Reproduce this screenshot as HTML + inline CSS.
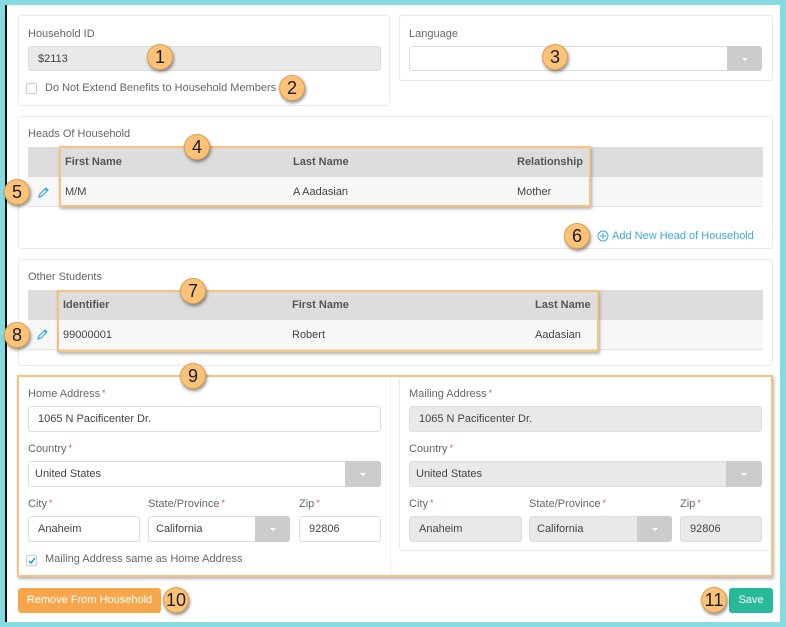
<!DOCTYPE html>
<html><head><meta charset="utf-8"><style>
*{box-sizing:border-box;margin:0;padding:0}
body{width:786px;height:627px;background:#86dbe0;position:relative;overflow:hidden;font-family:"Liberation Sans",sans-serif;font-size:11px;color:#555}
.a{position:absolute}
.page{left:5px;top:5px;width:775px;height:617px;background:#fff;border-left:2px solid #111}
.panel{position:absolute;border:1px solid #eaeaea;border-radius:3px;background:#fff}
.lbl{position:absolute;color:#666;font-size:11px;white-space:nowrap}
.lbl b{color:#d9534f;font-weight:normal;font-size:9px;vertical-align:top;margin-left:2px}
.in{position:absolute;border:1px solid #ddd;border-radius:3px;background:#fff;color:#444;padding-left:9px;font-size:11px;display:flex;align-items:center;white-space:nowrap}
.dis{background:#e9e9e9}
.btn{position:absolute;top:-1px;right:-1px;bottom:-1px;background:#ccc;border-radius:0 3px 3px 0}
.btn:after{content:"";position:absolute;left:50%;top:50%;margin:-1px 0 0 -3px;border:3px solid transparent;border-top:3px solid #fff}
.th{position:absolute;background:#ddd;font-weight:bold;color:#555;font-size:11px}
.tr{position:absolute;background:#f7f7f7;color:#444;font-size:11px;border-bottom:1px solid #e5e5e5}
.c{position:absolute;top:50%;transform:translateY(-50%);white-space:nowrap}
.ob{position:absolute;border:2px solid #f5c27f;box-shadow:1px 2px 3px rgba(0,0,0,.3)}
.bd{position:absolute;width:26px;height:26px;border-radius:50%;background:#fcc378;border:1px solid #d9a050;box-shadow:1px 2px 3px rgba(0,0,0,.45);color:#1b1b2e;font-size:18px;text-align:center;line-height:25px}
.cb{position:absolute;width:11px;height:11px;border:1px solid #ccc;border-radius:2px;background:#fff}
</style></head><body>
<div class="a page"></div>

<div class="panel" style="left:18px;top:15px;width:372px;height:91px"></div>
<div class="lbl" style="left:28px;top:28px">Household ID</div>
<div class="in dis" style="left:28px;top:46px;width:353px;height:25px">$2113</div>
<div class="cb" style="left:26px;top:83px"></div>
<div class="lbl" style="left:45px;top:82px">Do Not Extend Benefits to Household Members</div>

<div class="panel" style="left:399px;top:15px;width:374px;height:66px"></div>
<div class="lbl" style="left:409px;top:28px">Language</div>
<div class="in" style="left:409px;top:46px;width:353px;height:25px"><div class="btn" style="width:35px"></div></div>

<div class="panel" style="left:18px;top:116px;width:755px;height:133px"></div>
<div class="lbl" style="left:28px;top:128px">Heads Of Household</div>
<div class="th" style="left:28px;top:147px;width:735px;height:30px">
<span class="c" style="left:37px">First Name</span><span class="c" style="left:265px">Last Name</span><span class="c" style="left:489px">Relationship</span></div>
<div class="tr" style="left:28px;top:177px;width:735px;height:30px">
<span class="c" style="left:37px">M/M</span><span class="c" style="left:265px">A Aadasian</span><span class="c" style="left:489px">Mother</span></div>
<svg class="a" style="left:37px;top:186px" width="13" height="13" viewBox="0 0 13 13"><path d="M2 11 L3 8 L9 2 L11 4 L5 10 Z M8 3 L10 5" fill="none" stroke="#3aa8d8" stroke-width="1.2"/></svg>
<div class="ob" style="left:59px;top:146px;width:532px;height:61px"></div>
<svg class="a" style="left:597px;top:230px" width="12" height="12"><circle cx="6" cy="6" r="5" fill="none" stroke="#3aa8d8"/><path d="M6 3V9M3 6H9" stroke="#3aa8d8"/></svg>
<div class="lbl" style="left:612px;top:230px;color:#3aa8d8">Add New Head of Household</div>

<div class="panel" style="left:18px;top:259px;width:755px;height:107px"></div>
<div class="lbl" style="left:28px;top:271px">Other Students</div>
<div class="th" style="left:28px;top:290px;width:735px;height:30px">
<span class="c" style="left:35px">Identifier</span><span class="c" style="left:264px">First Name</span><span class="c" style="left:507px">Last Name</span></div>
<div class="tr" style="left:28px;top:320px;width:735px;height:30px">
<span class="c" style="left:35px">99000001</span><span class="c" style="left:264px">Robert</span><span class="c" style="left:507px">Aadasian</span></div>
<svg class="a" style="left:36px;top:328px" width="13" height="13" viewBox="0 0 13 13"><path d="M2 11 L3 8 L9 2 L11 4 L5 10 Z M8 3 L10 5" fill="none" stroke="#3aa8d8" stroke-width="1.2"/></svg>
<div class="ob" style="left:57px;top:290px;width:542px;height:62px"></div>

<div class="a" style="left:390px;top:377px;width:1px;height:198px;background:#eee"></div>
<div class="panel" style="left:399px;top:376px;width:374px;height:175px"></div>
<div class="lbl" style="left:28px;top:388px">Home Address<b>*</b></div>
<div class="in" style="left:28px;top:406px;width:353px;height:26px">1065 N Pacificenter Dr.</div>
<div class="lbl" style="left:28px;top:443px">Country<b>*</b></div>
<div class="in" style="left:28px;top:461px;width:353px;height:26px;padding-left:6px">United States<div class="btn" style="width:36px"></div></div>
<div class="lbl" style="left:28px;top:498px">City<b>*</b></div>
<div class="lbl" style="left:148px;top:498px">State/Province<b>*</b></div>
<div class="lbl" style="left:299px;top:498px">Zip<b>*</b></div>
<div class="in" style="left:28px;top:516px;width:112px;height:26px">Anaheim</div>
<div class="in" style="left:148px;top:516px;width:142px;height:26px;padding-left:7px">California<div class="btn" style="width:35px"></div></div>
<div class="in" style="left:299px;top:516px;width:82px;height:26px">92806</div>
<div class="cb" style="left:26px;top:555px"></div>
<svg class="a" style="left:27px;top:556px" width="10" height="10"><path d="M2 5 L4 7 L8 2" fill="none" stroke="#2a9fd6" stroke-width="1.6"/></svg>
<div class="lbl" style="left:45px;top:553px">Mailing Address same as Home Address</div>

<div class="lbl" style="left:409px;top:388px">Mailing Address<b>*</b></div>
<div class="in dis" style="left:409px;top:406px;width:353px;height:26px">1065 N Pacificenter Dr.</div>
<div class="lbl" style="left:409px;top:443px">Country<b>*</b></div>
<div class="in dis" style="left:409px;top:461px;width:353px;height:26px;padding-left:6px">United States<div class="btn" style="width:36px"></div></div>
<div class="lbl" style="left:409px;top:498px">City<b>*</b></div>
<div class="lbl" style="left:529px;top:498px">State/Province<b>*</b></div>
<div class="lbl" style="left:680px;top:498px">Zip<b>*</b></div>
<div class="in dis" style="left:409px;top:516px;width:113px;height:26px">Anaheim</div>
<div class="in dis" style="left:529px;top:516px;width:143px;height:26px;padding-left:7px">California<div class="btn" style="width:35px"></div></div>
<div class="in dis" style="left:680px;top:516px;width:82px;height:26px">92806</div>
<div class="ob" style="left:17px;top:375px;width:756px;height:202px"></div>

<div class="a" style="left:18px;top:588px;width:143px;height:25px;background:#f7a64b;border-radius:3px;color:#fff;font-size:11px;text-align:center;line-height:25px">Remove From Household</div>
<div class="a" style="left:729px;top:588px;width:44px;height:25px;background:#26b99a;border-radius:3px;color:#fff;font-size:11px;text-align:center;line-height:25px">Save</div>

<div class="bd" style="left:147px;top:44px">1</div>
<div class="bd" style="left:279px;top:75px">2</div>
<div class="bd" style="left:542px;top:44px">3</div>
<div class="bd" style="left:184px;top:134px">4</div>
<div class="bd" style="left:4px;top:179px">5</div>
<div class="bd" style="left:564px;top:223px">6</div>
<div class="bd" style="left:180px;top:278px">7</div>
<div class="bd" style="left:4px;top:322px">8</div>
<div class="bd" style="left:180px;top:363px">9</div>
<div class="bd" style="left:163px;top:587px">10</div>
<div class="bd" style="left:701px;top:587px">11</div>
</body></html>
